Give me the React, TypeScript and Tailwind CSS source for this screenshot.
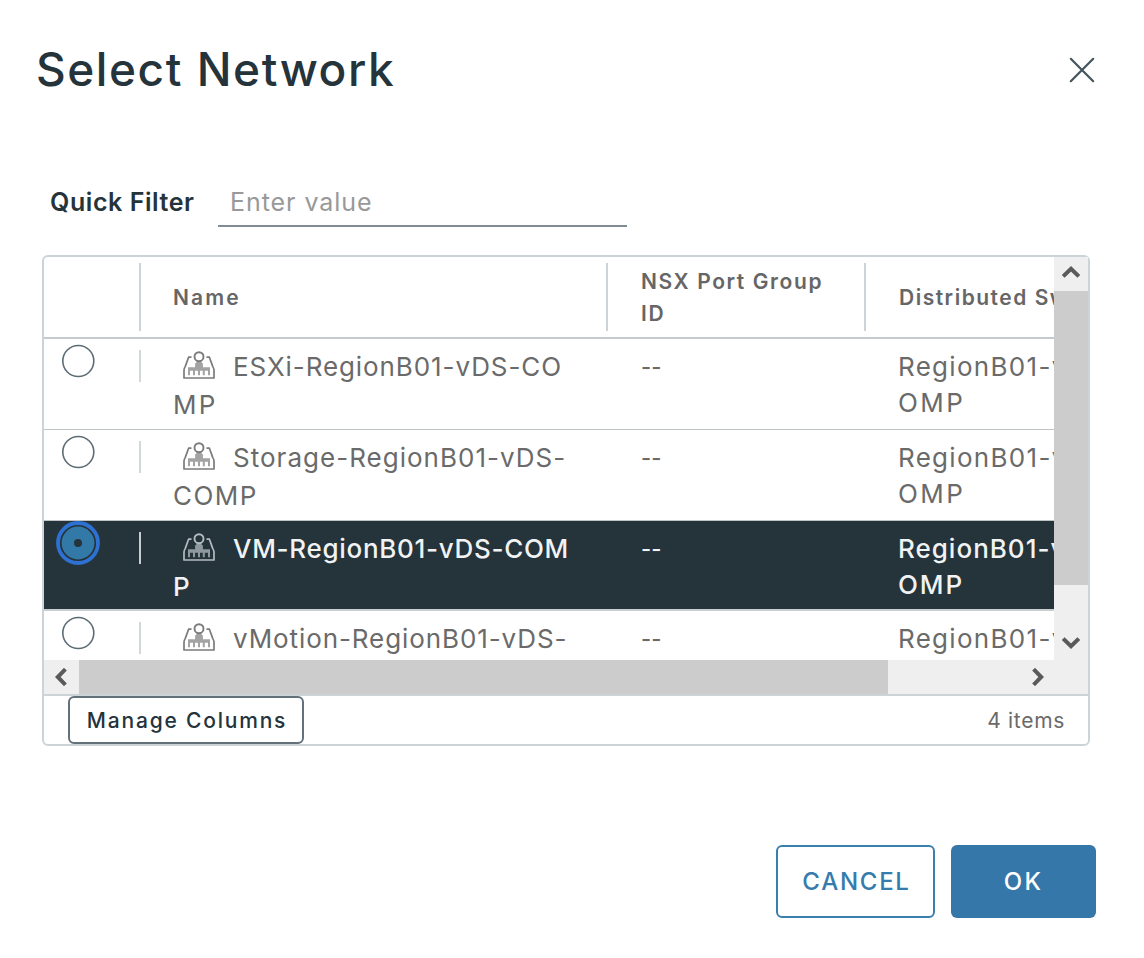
import type { ReactNode } from "react";

type Network = {
  id: string;
  name: [string, string];
  nameTracking: [string, string];
  selected?: boolean;
};

const networks: Network[] = [
  { id: "esxi", name: ["ESXi-RegionB01-vDS-CO", "MP"], nameTracking: ["tracking-[0.92px]", "tracking-[2.2px]"] },
  { id: "storage", name: ["Storage-RegionB01-vDS-", "COMP"], nameTracking: ["tracking-[1.02px]", "tracking-[1.5px]"] },
  { id: "vm", name: ["VM-RegionB01-vDS-COM", "P"], nameTracking: ["tracking-[0.7px]", "tracking-[1px]"], selected: true },
  { id: "vmotion", name: ["vMotion-RegionB01-vDS-", ""], nameTracking: ["tracking-[0.91px]", "tracking-[1px]"] },
];

function CloseIcon() {
  return (
    <svg width="26" height="26" viewBox="0 0 26 26" fill="none" stroke="#44545d" strokeWidth="2.2" strokeLinecap="round">
      <path d="M1.8 1.8 24.2 24.2M24.2 1.8 1.8 24.2" />
    </svg>
  );
}

function PortGroupIcon({ selected }: { selected?: boolean }) {
  const line = selected ? "#b4bcc0" : "#7b7b7b";
  const body = selected ? "#8d999e" : "#a3a3a3";
  return (
    <svg width="34" height="30" viewBox="0 0 34 30" fill="none">
      <path
        d="M9.5 7.2H6.6L3.2 16.6Q2 18.5 2 20V28H32V20Q32 18.5 30.8 16.6L27.4 7.2H24.5"
        stroke={line}
        strokeWidth="1.7"
        strokeLinejoin="round"
      />
      <path
        d="M14.4 11h5.2v1.6l1.3 1v3.6h7.1v8h-2v-4.4h-3.2v4.4h-2v-4.4H18v4.4h-2v-4.4h-3v4.4h-2v-4.4H8v4.4H6v-8h7.1v-3.6l1.3-1z"
        fill={body}
      />
      <circle cx="17" cy="6.7" r="4.5" fill={selected ? "#25333b" : "#ffffff"} stroke={line} strokeWidth="1.9" />
    </svg>
  );
}

function Radio({ selected }: { selected?: boolean }) {
  if (selected) {
    return (
      <svg width="44" height="44" viewBox="0 0 44 44">
        <circle cx="22" cy="22" r="20" fill="#25333b" stroke="#2d72d2" strokeWidth="3.8" />
        <circle cx="22" cy="22" r="16.4" fill="#3379a8" />
        <circle cx="22" cy="22" r="4" fill="#25333b" />
      </svg>
    );
  }
  return (
    <svg width="44" height="44" viewBox="0 0 44 44" fill="none">
      <circle cx="22.3" cy="22" r="15.5" stroke="#5c6c75" strokeWidth="1.6" />
    </svg>
  );
}

function Chevron({ className }: { className: string }) {
  return (
    <svg className={className} width="18" height="14" viewBox="0 0 18 14" fill="none">
      <path d="M1.2 11.4 9 3.8l7.8 7.6" stroke="#5a5a5a" strokeWidth="4" />
    </svg>
  );
}

function HeaderCell({ className, children }: { className: string; children?: ReactNode }) {
  return (
    <div className={`flex shrink-0 items-center pt-0.5 text-[21px] leading-8 font-semibold text-[#666666] ${className}`}>
      {children}
    </div>
  );
}

function NetworkRow({ network, height }: { network: Network; height: string }) {
  const { selected, name, nameTracking } = network;
  return (
    <div
      className={`flex w-[1250px] shrink-0 text-[26px] leading-9 whitespace-nowrap ${height} ${
        selected
          ? "border-b-2 border-[#c9ced0] bg-[#25333b] font-medium text-[#f0f2f3]"
          : "border-b border-[#bfc4c6] bg-white text-[#6a6a6a]"
      }`}
    >
      <div className="w-[95px] shrink-0 pl-3">
        <Radio selected={selected} />
      </div>
      <div className={`mt-[11px] h-8 w-0.5 shrink-0 ${selected ? "bg-[#c7cdd0]" : "bg-[#d3d8da]"}`} />
      <div className="w-[467px] shrink-0 pt-2.5 pl-8">
        <div className="flex h-[38px]">
          <span className="ml-[9px] w-[51px] pt-px">
            <PortGroupIcon selected={selected} />
          </span>
          <span className={nameTracking[0]}>{name[0]}</span>
        </div>
        <div className={nameTracking[1]}>{name[1]}</div>
      </div>
      <div className="w-[257px] shrink-0 pt-2.5 pl-[33px] text-[22px] font-medium">--</div>
      <div className="pt-2.5 pl-[33px]">
        <div className={selected ? "tracking-[1px]" : "tracking-[1.3px]"}>RegionB01-vDS-C</div>
        <div className={selected ? "tracking-[1.9px]" : "tracking-[2.4px]"}>OMP</div>
      </div>
    </div>
  );
}

function VerticalScrollbar() {
  return (
    <div className="flex w-[34px] shrink-0 flex-col bg-[#efefef]">
      <div className="flex h-[34px] items-center justify-center">
        <Chevron className="-mt-1" />
      </div>
      <div className="h-[294px] bg-[#cccccc]" />
      <div className="flex flex-1 items-end justify-center pb-2.5">
        <Chevron className="rotate-180" />
      </div>
    </div>
  );
}

function HorizontalScrollbar() {
  return (
    <div className="flex h-[34px] shrink-0 bg-[#efefef]">
      <div className="flex w-[35px] items-center pl-2">
        <Chevron className="-rotate-90" />
      </div>
      <div className="w-[809px] bg-[#cccccc]" />
      <div className="flex w-[166px] items-center justify-end pr-[7px]">
        <Chevron className="rotate-90" />
      </div>
    </div>
  );
}

export default function App() {
  return (
    <div className="flex h-[958px] w-[1144px] flex-col overflow-hidden bg-white font-['Inter','Liberation_Sans',sans-serif]">
      <header className="flex items-start justify-between pt-[38px] pr-[49px] pl-9">
        <h1 className="pt-px text-[46px] leading-[60px] font-medium tracking-[1.56px] text-[#25333b]">Select Network</h1>
        <button className="mt-[19px]" aria-label="Close">
          <CloseIcon />
        </button>
      </header>

      <div className="mt-[84px] flex pl-[50px] text-[25px] leading-9">
        <label htmlFor="filter" className="w-[168px] pt-px font-semibold tracking-[0.57px] text-[#25333b]">
          Quick Filter
        </label>
        <input
          id="filter"
          placeholder="Enter value"
          className="h-11 w-[409px] border-b-2 border-[#7f8c92] bg-transparent pb-1 pl-3 tracking-[0.95px] outline-none placeholder:text-[#999999]"
        />
      </div>

      <section className="mt-7 ml-[42px] flex h-[491px] w-[1048px] flex-col rounded-md border-2 border-[#ccd4d8]">
        <div className="flex h-[403px] shrink-0 overflow-hidden">
          <div className="flex min-w-0 flex-1 flex-col overflow-hidden">
            <div className="flex h-[82px] w-[1250px] shrink-0 border-b-2 border-[#c6cacc]">
              <div className="w-[95px] shrink-0" />
              <div className="mt-1.5 h-[68px] w-0.5 shrink-0 bg-[#ccd4d8]" />
              <HeaderCell className="w-[465px] pl-[32px] tracking-[2.1px]">Name</HeaderCell>
              <div className="mt-1.5 h-[68px] w-0.5 shrink-0 bg-[#ccd4d8]" />
              <HeaderCell className="w-[256px] pl-[33px] tracking-[1.6px]">
                <span>
                  NSX Port Group
                  <br />
                  ID
                </span>
              </HeaderCell>
              <div className="mt-1.5 h-[68px] w-0.5 shrink-0 bg-[#ccd4d8]" />
              <HeaderCell className="pl-[33px] tracking-[1.5px]">Distributed Switch</HeaderCell>
            </div>
            <NetworkRow network={networks[0]} height="h-[91px]" />
            <NetworkRow network={networks[1]} height="h-[91px]" />
            <NetworkRow network={networks[2]} height="h-[90px]" />
            <NetworkRow network={networks[3]} height="h-[91px]" />
          </div>
          <VerticalScrollbar />
        </div>
        <HorizontalScrollbar />
        <footer className="flex flex-1 items-center justify-between border-t-2 border-[#ccd4d8] pr-[23px] pl-6">
          <button className="h-[48px] w-[236px] shrink-0 rounded-md border-2 border-[#63727a] pt-0.5 pl-0.5 text-[21px] font-medium tracking-[1.8px] whitespace-nowrap text-[#25333b]">
            Manage Columns
          </button>
          <span className="pt-0.5 text-[21px] tracking-[0.69px] text-[#6a6a6a]">4 items</span>
        </footer>
      </section>

      <div className="mt-[99px] flex justify-end gap-4 pr-12 text-2xl font-medium">
        <button className="h-[73px] w-[159px] rounded-md border-2 border-[#3a80ae] pl-0.5 tracking-[1.74px] text-[#357cac]">
          CANCEL
        </button>
        <button className="h-[73px] w-[145px] rounded-md bg-[#3477a8] tracking-[2.4px] text-white">OK</button>
      </div>
    </div>
  );
}
